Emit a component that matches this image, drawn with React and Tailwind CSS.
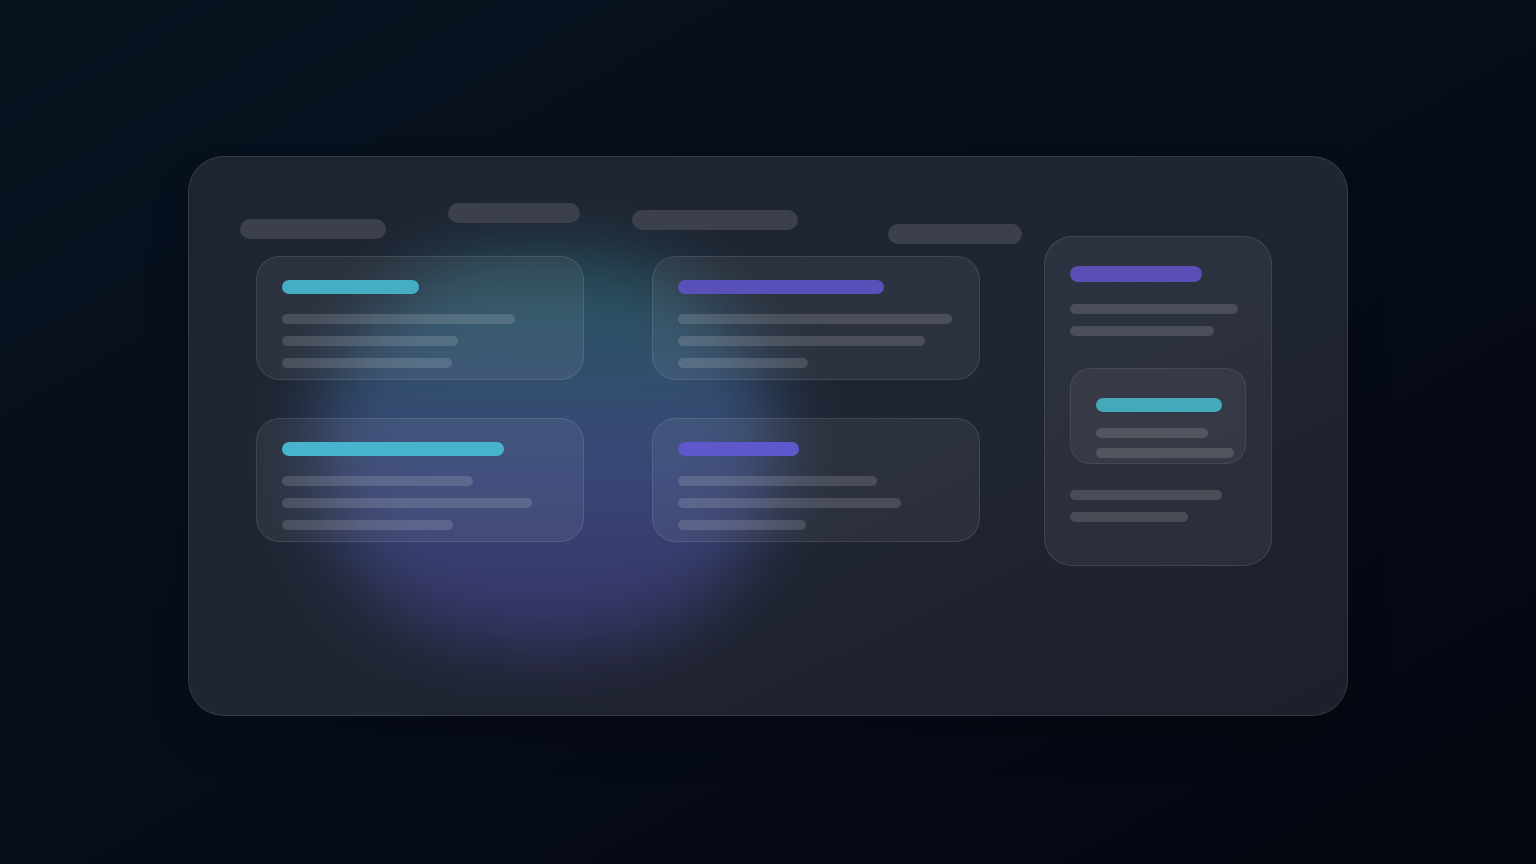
export default function App() {
  const Line = ({ w }) => (
    <div className="h-[10px] rounded-full bg-white/[0.14]" style={{ width: w }} />
  );
  const Card = ({ titleW, color, lines }) => (
    <div className="h-[124px] w-[328px] rounded-[24px] border border-white/10 bg-white/[0.06] pl-[25px] pt-[23px]">
      <div className={`h-[14px] rounded-full ${color}`} style={{ width: titleW }} />
      <div className="mt-[20px] flex flex-col gap-[12px]">
        {lines.map((w, i) => (
          <Line key={i} w={w} />
        ))}
      </div>
    </div>
  );
  return (
    <div className="flex h-[864px] w-[1536px] items-start justify-start overflow-hidden bg-gradient-to-br from-[#08121f] via-[#060d1b] to-[#04060f]">
      <div className="relative ml-[188px] mt-[156px] h-[560px] w-[1160px] overflow-hidden rounded-[36px] border border-white/10 bg-gradient-to-br from-[#1e2532] via-[#1f2633] to-[#1e1f2b] shadow-2xl">
        <div className="pointer-events-none absolute left-[128px] top-[100px] h-[390px] w-[460px] rounded-full bg-gradient-to-b from-[#2f7a80] via-[#4d66b0] to-[#4a3e92] opacity-55 blur-[34px]" />
        <div className="relative flex items-start pl-[51px] pt-[46px]">
          <div className="flex w-[782px] flex-col">
            <div className="flex h-[41px] items-start">
              <div className="mt-[16px] h-[20px] w-[146px] rounded-full bg-[#3b404c]" />
              <div className="ml-[62px] h-[20px] w-[132px] rounded-full bg-[#3b404c]" />
              <div className="ml-[52px] mt-[7px] h-[20px] w-[166px] rounded-full bg-[#3b404c]" />
              <div className="ml-[90px] mt-[21px] h-[20px] w-[134px] rounded-full bg-[#3b404c]" />
            </div>
            <div className="ml-[16px] mt-[12px] grid grid-cols-[328px_328px] gap-x-[68px] gap-y-[38px]">
              <Card titleW={137} color="bg-[#46aec4]" lines={[233, 176, 170]} />
              <Card titleW={206} color="bg-[#5a50b9]" lines={[274, 247, 130]} />
              <Card titleW={222} color="bg-[#48b3cc]" lines={[191, 250, 171]} />
              <Card titleW={121} color="bg-[#5f58cc]" lines={[199, 223, 128]} />
            </div>
          </div>
          <div className="ml-[22px] mt-[33px] h-[330px] w-[228px] rounded-[28px] border border-white/10 bg-white/[0.06] pl-[25px] pt-[29px]">
            <div className="h-[16px] w-[132px] rounded-full bg-[#5a4fb5]" />
            <div className="mt-[22px] flex flex-col gap-[12px]">
              <Line w={168} />
              <Line w={144} />
            </div>
            <div className="mt-[32px] h-[96px] w-[176px] rounded-[20px] border border-white/[0.08] bg-white/[0.05] pl-[25px] pt-[29px]">
              <div className="h-[14px] w-[126px] rounded-full bg-[#44a9ba]" />
              <div className="mt-[16px] flex flex-col gap-[10px]">
                <Line w={112} />
                <Line w={138} />
              </div>
            </div>
            <div className="mt-[26px] flex flex-col gap-[12px]">
              <Line w={152} />
              <Line w={118} />
            </div>
          </div>
        </div>
      </div>
    </div>
  );
}
